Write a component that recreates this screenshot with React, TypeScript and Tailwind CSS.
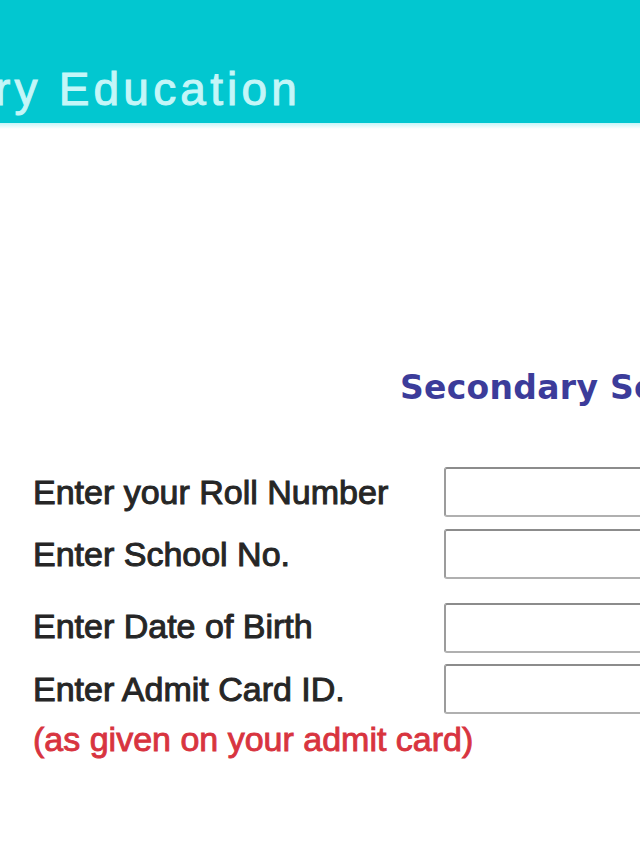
import React from "react";

const rows = [
  { label: "Enter your Roll Number", mt: "mt-[63px]", lift: "" },
  { label: "Enter School No.", mt: "mt-[12px]", lift: "" },
  { label: "Enter Date of Birth", mt: "mt-[24px]", lift: "mb-[5px]" },
  { label: "Enter Admit Card ID.", mt: "mt-[11px]", lift: "" },
];

export default function App() {
  return (
    <div className="w-[640px] h-[853px] overflow-hidden bg-white font-['Liberation_Sans',Arial,sans-serif]">
      <div className="h-[123px] bg-[#02c7d0] pt-[66px] overflow-hidden">
        <div className="ml-[-5px] whitespace-nowrap text-[46px] leading-[46px] tracking-[4.2px] text-[#c4f6f8] [-webkit-text-stroke:1px_#c4f6f8]">
          ry Education
        </div>
      </div>
      <div className="h-[6px] bg-gradient-to-b from-[#c6f5f7] to-white" />
      <div className="pt-[242px] pl-[400px] whitespace-nowrap font-['DejaVu_Sans',Verdana,sans-serif] font-bold text-[33px] leading-[33px] tracking-[0.3px] text-[#3c3c9a]">
        Secondary School Examination Result
      </div>
      <div className="pl-[33px]">
        {rows.map((r) => (
          <div key={r.label} className={`${r.mt} flex items-center h-[50px]`}>
            <div className={`${r.lift} w-[411px] shrink-0 whitespace-nowrap text-[34px] leading-[34px] text-[#262626] [-webkit-text-stroke:1px_#262626]`}>
              {r.label}
            </div>
            <div className="w-[300px] h-[50px] shrink-0 rounded-[3px] border-2 border-[#b0b0b0] border-t-[#8c8c8c] border-l-[#9c9c9c] bg-white" />
          </div>
        ))}
        <div className="mt-[8px] whitespace-nowrap text-[34px] leading-[34px] text-[#d8343f] [-webkit-text-stroke:0.9px_#d8343f]">
          (as given on your admit card)
        </div>
      </div>
    </div>
  );
}
